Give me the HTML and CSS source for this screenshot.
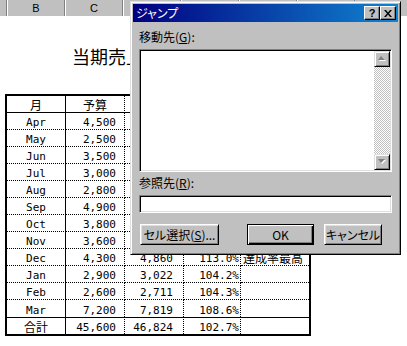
FILE: index.html
```html
<html>
<head>
    <link rel="stylesheet" href="styles.css">
    <title>ジャンプ</title>
</head>
<body>
<div class="sheet">
    <!-- column headers of the worksheet -->
    <div class="col_headers">
        <div class="corner"></div>
        <div class="col_head">B</div>
        <div class="col_head">C</div>
        <div class="col_head"></div>
        <div class="col_head"></div>
        <div class="col_head"></div>
        <div class="col_head"></div>
    </div>

    <h1 class="sheet_title">当期売上実績</h1>

    <table class="sales">
        <tr class="head_row">
            <th class="jp">月</th>
            <th class="jp">予算</th>
            <th class="jp">実績</th>
            <th class="jp">達成率</th>
            <th class="jp">備考</th>
        </tr>
        <tr><td class="month">Apr</td><td class="budget">4,500</td><td class="actual">4,320</td><td class="rate">96.0%</td><td></td></tr>
        <tr><td class="month">May</td><td class="budget">2,500</td><td class="actual">2,610</td><td class="rate">104.4%</td><td></td></tr>
        <tr><td class="month">Jun</td><td class="budget">3,500</td><td class="actual">3,390</td><td class="rate">96.9%</td><td></td></tr>
        <tr><td class="month">Jul</td><td class="budget">3,000</td><td class="actual">3,105</td><td class="rate">103.5%</td><td></td></tr>
        <tr><td class="month">Aug</td><td class="budget">2,800</td><td class="actual">2,740</td><td class="rate">97.9%</td><td></td></tr>
        <tr><td class="month">Sep</td><td class="budget">4,900</td><td class="actual">5,012</td><td class="rate">102.3%</td><td></td></tr>
        <tr><td class="month">Oct</td><td class="budget">3,800</td><td class="actual">3,655</td><td class="rate">96.2%</td><td></td></tr>
        <tr><td class="month">Nov</td><td class="budget">3,600</td><td class="actual">3,580</td><td class="rate">99.4%</td><td></td></tr>
        <tr><td class="month">Dec</td><td class="budget">4,300</td><td class="actual">4,860</td><td class="rate">113.0%</td><td class="jp note">達成率最高</td></tr>
        <tr><td class="month">Jan</td><td class="budget">2,900</td><td class="actual">3,022</td><td class="rate">104.2%</td><td></td></tr>
        <tr><td class="month">Feb</td><td class="budget">2,600</td><td class="actual">2,711</td><td class="rate">104.3%</td><td></td></tr>
        <tr><td class="month">Mar</td><td class="budget">7,200</td><td class="actual">7,819</td><td class="rate">108.6%</td><td></td></tr>
        <tr class="total_row"><td class="jp">合計</td><td class="budget">45,600</td><td class="actual">46,824</td><td class="rate">102.7%</td><td></td></tr>
    </table>
</div>

<!-- the "go to" dialog on top of the sheet -->
<div class="dialog">
    <div class="titlebar">
        <span class="title">ジャンプ</span>
        <div class="title_buttons">
            <span class="title_btn help">?</span>
            <span class="title_btn">
                <svg width="8" height="7" viewBox="0 0 8 7">
                    <path d="M0 0h2l2 2.5L6 0h2L5 3.5 8 7H6L4 4.5 2 7H0l3-3.5z" fill="#000"/>
                </svg>
            </span>
        </div>
    </div>

    <div class="dialog_body">
        <div class="label">移動先(<u>G</u>):</div>
        <div class="listbox">
            <div class="list_area"></div>
            <div class="scrollbar">
                <div class="scroll_btn">
                    <svg width="9" height="6" viewBox="0 0 9 6">
                        <polygon points="4,1 8,5 1,5" fill="#fff"/>
                        <polygon points="3,0 7,4 0,4" fill="#808080"/>
                    </svg>
                </div>
                <div class="scroll_track"></div>
                <div class="scroll_btn">
                    <svg width="9" height="6" viewBox="0 0 9 6">
                        <polygon points="1,1 8,1 4,5" fill="#fff"/>
                        <polygon points="0,0 7,0 3,4" fill="#808080"/>
                    </svg>
                </div>
            </div>
        </div>

        <div class="label label_ref">参照先(<u>R</u>):</div>
        <div class="textbox"></div>

        <div class="buttons">
            <button type="button" class="btn btn_select">セル選択(<u>S</u>)...</button>
            <button type="button" class="btn btn_ok">OK</button>
            <button type="button" class="btn btn_cancel">キャンセル</button>
        </div>
    </div>
</div>
</body>
</html>
```

FILE: styles.css
```css
body {
    margin: 0;
    background-color: #fff;
    font-family: "Noto Sans CJK JP", sans-serif;
    color: #000;
}

.sheet {
    width: 407px;
    height: 346px;
    overflow: hidden;
}

/* worksheet column header strip */
.col_headers {
    display: flex;
    height: 16px;
    background-color: #c0c0c0;
    box-sizing: border-box;
}

.corner {
    width: 6px;
    flex: none;
    border-right: 1px solid #808080;
}

.col_head {
    width: 56px;
    flex: none;
    border-left: 1px solid #fff;
    border-right: 1px solid #808080;
    text-align: center;
    font: 11px/16px "Liberation Sans", sans-serif;
}

.sheet_title {
    margin: 0 0 28px 0;
    padding: 30px 0 0 72px;
    height: 20px;
    font-size: 18px;
    font-weight: normal;
    line-height: 20px;
    white-space: nowrap;
}

/* sales table */
.sales {
    margin-left: 5px;
    border: 2px solid #000;
    border-collapse: separate;
    border-spacing: 0;
    table-layout: fixed;
    width: 306px;
    font-family: "DejaVu Sans Mono", "Noto Sans CJK JP", monospace;
    font-size: 11px;
}

.sales th,
.sales td {
    box-sizing: border-box;
    height: 17px;
    padding: 4px 0 0 0;
    line-height: 12px;
    border-right: 1px dotted #000;
    border-bottom: 1px dotted #000;
    font-weight: normal;
    white-space: nowrap;
    overflow: hidden;
}

.sales th:nth-child(1) { width: 59px; }
.sales th:nth-child(2) { width: 59px; }
.sales th:nth-child(3) { width: 59px; }
.sales th:nth-child(4) { width: 57px; }
.sales th:nth-child(5) { width: 68px; }

.sales td:first-child,
.sales th:first-child {
    border-right-style: solid;
}

.sales td:last-child,
.sales th:last-child {
    border-right: none;
}

.head_row th {
    border-bottom-style: solid;
}

.total_row td {
    border-top: 1px solid #000;
    border-bottom: none;
    height: 17px;
}

.sales tr:nth-last-child(2) td {
    border-bottom: none;
}

.sales .jp {
    font-family: "Noto Sans CJK JP", sans-serif;
    font-size: 12px;
    padding-top: 2px;
    text-align: center;
}

.sales .note {
    text-align: left;
    padding-left: 2px;
}

.month {
    text-align: center;
}

.budget {
    text-align: right;
    padding-right: 8px !important;
}

.actual {
    text-align: right;
    padding-right: 10px !important;
}

.rate {
    text-align: right;
    padding-right: 1px !important;
}

/* dialog window */
.dialog {
    position: absolute;
    left: 130px;
    top: 1px;
    width: 271px;
    height: 254px;
    box-sizing: border-box;
    padding: 2px;
    background-color: #c0c0c0;
    border: 1px solid;
    border-color: #dfdfdf #000 #000 #dfdfdf;
    box-shadow: inset 1px 1px #fff, inset -1px -1px #808080;
    font-size: 12px;
    font-feature-settings: "palt";
}

.titlebar {
    display: flex;
    align-items: center;
    justify-content: space-between;
    height: 18px;
    padding: 0 2px 0 3px;
    background: linear-gradient(90deg, #000080, #1084d0);
    color: #fff;
}

.title {
    line-height: 18px;
}

.title_buttons {
    display: flex;
}

.title_btn {
    display: flex;
    align-items: center;
    justify-content: center;
    width: 16px;
    height: 14px;
    box-sizing: border-box;
    background-color: #c0c0c0;
    border: 1px solid;
    border-color: #fff #000 #000 #fff;
    box-shadow: inset -1px -1px #808080;
    color: #000;
}

.help {
    font: bold 11px/12px "Liberation Sans", sans-serif;
}

.dialog_body {
    padding: 0 6px;
}

.label {
    margin-top: 7px;
    line-height: 16px;
}

.label_ref {
    margin-top: 3px;
}

.listbox {
    display: flex;
    margin-top: 4px;
    height: 123px;
    box-sizing: border-box;
    border: 1px solid;
    border-color: #808080 #fff #fff #808080;
    box-shadow: inset 1px 1px #000, inset -1px -1px #dfdfdf;
    padding: 1px;
}

.list_area {
    flex: 1;
    background-color: #fff;
}

.scrollbar {
    width: 16px;
    display: flex;
    flex-direction: column;
}

.scroll_btn {
    height: 16px;
    box-sizing: border-box;
    display: flex;
    align-items: center;
    justify-content: center;
    background-color: #c0c0c0;
    border: 1px solid;
    border-color: #dfdfdf #000 #000 #dfdfdf;
    box-shadow: inset 1px 1px #fff, inset -1px -1px #808080;
}

.scroll_track {
    flex: 1;
    background: repeating-conic-gradient(#c0c0c0 0 25%, #fff 0 50%) 0 0 / 2px 2px;
}

.textbox {
    margin-top: 4px;
    height: 18px;
    box-sizing: border-box;
    background-color: #fff;
    border: 1px solid;
    border-color: #808080 #fff #fff #808080;
    box-shadow: inset 1px 1px #000, inset -1px -1px #dfdfdf;
}

.buttons {
    display: flex;
    margin-top: 11px;
    padding-left: 1px;
}

.btn {
    height: 21px;
    box-sizing: border-box;
    padding: 0;
    background-color: #c0c0c0;
    border: 1px solid;
    border-color: #fff #000 #000 #fff;
    box-shadow: inset 1px 1px #dfdfdf, inset -1px -1px #808080;
    font-family: "Noto Sans CJK JP", sans-serif;
    font-size: 12px;
    font-feature-settings: "palt";
    line-height: 17px;
    color: #000;
}

.btn_select {
    width: 79px;
}

.btn_ok {
    width: 67px;
    margin-left: 28px;
    border-color: #000;
    box-shadow: inset 1px 1px #fff, inset -1px -1px #000, inset -2px -2px #808080;
}

.btn_cancel {
    width: 58px;
    margin-left: 10px;
}
```
